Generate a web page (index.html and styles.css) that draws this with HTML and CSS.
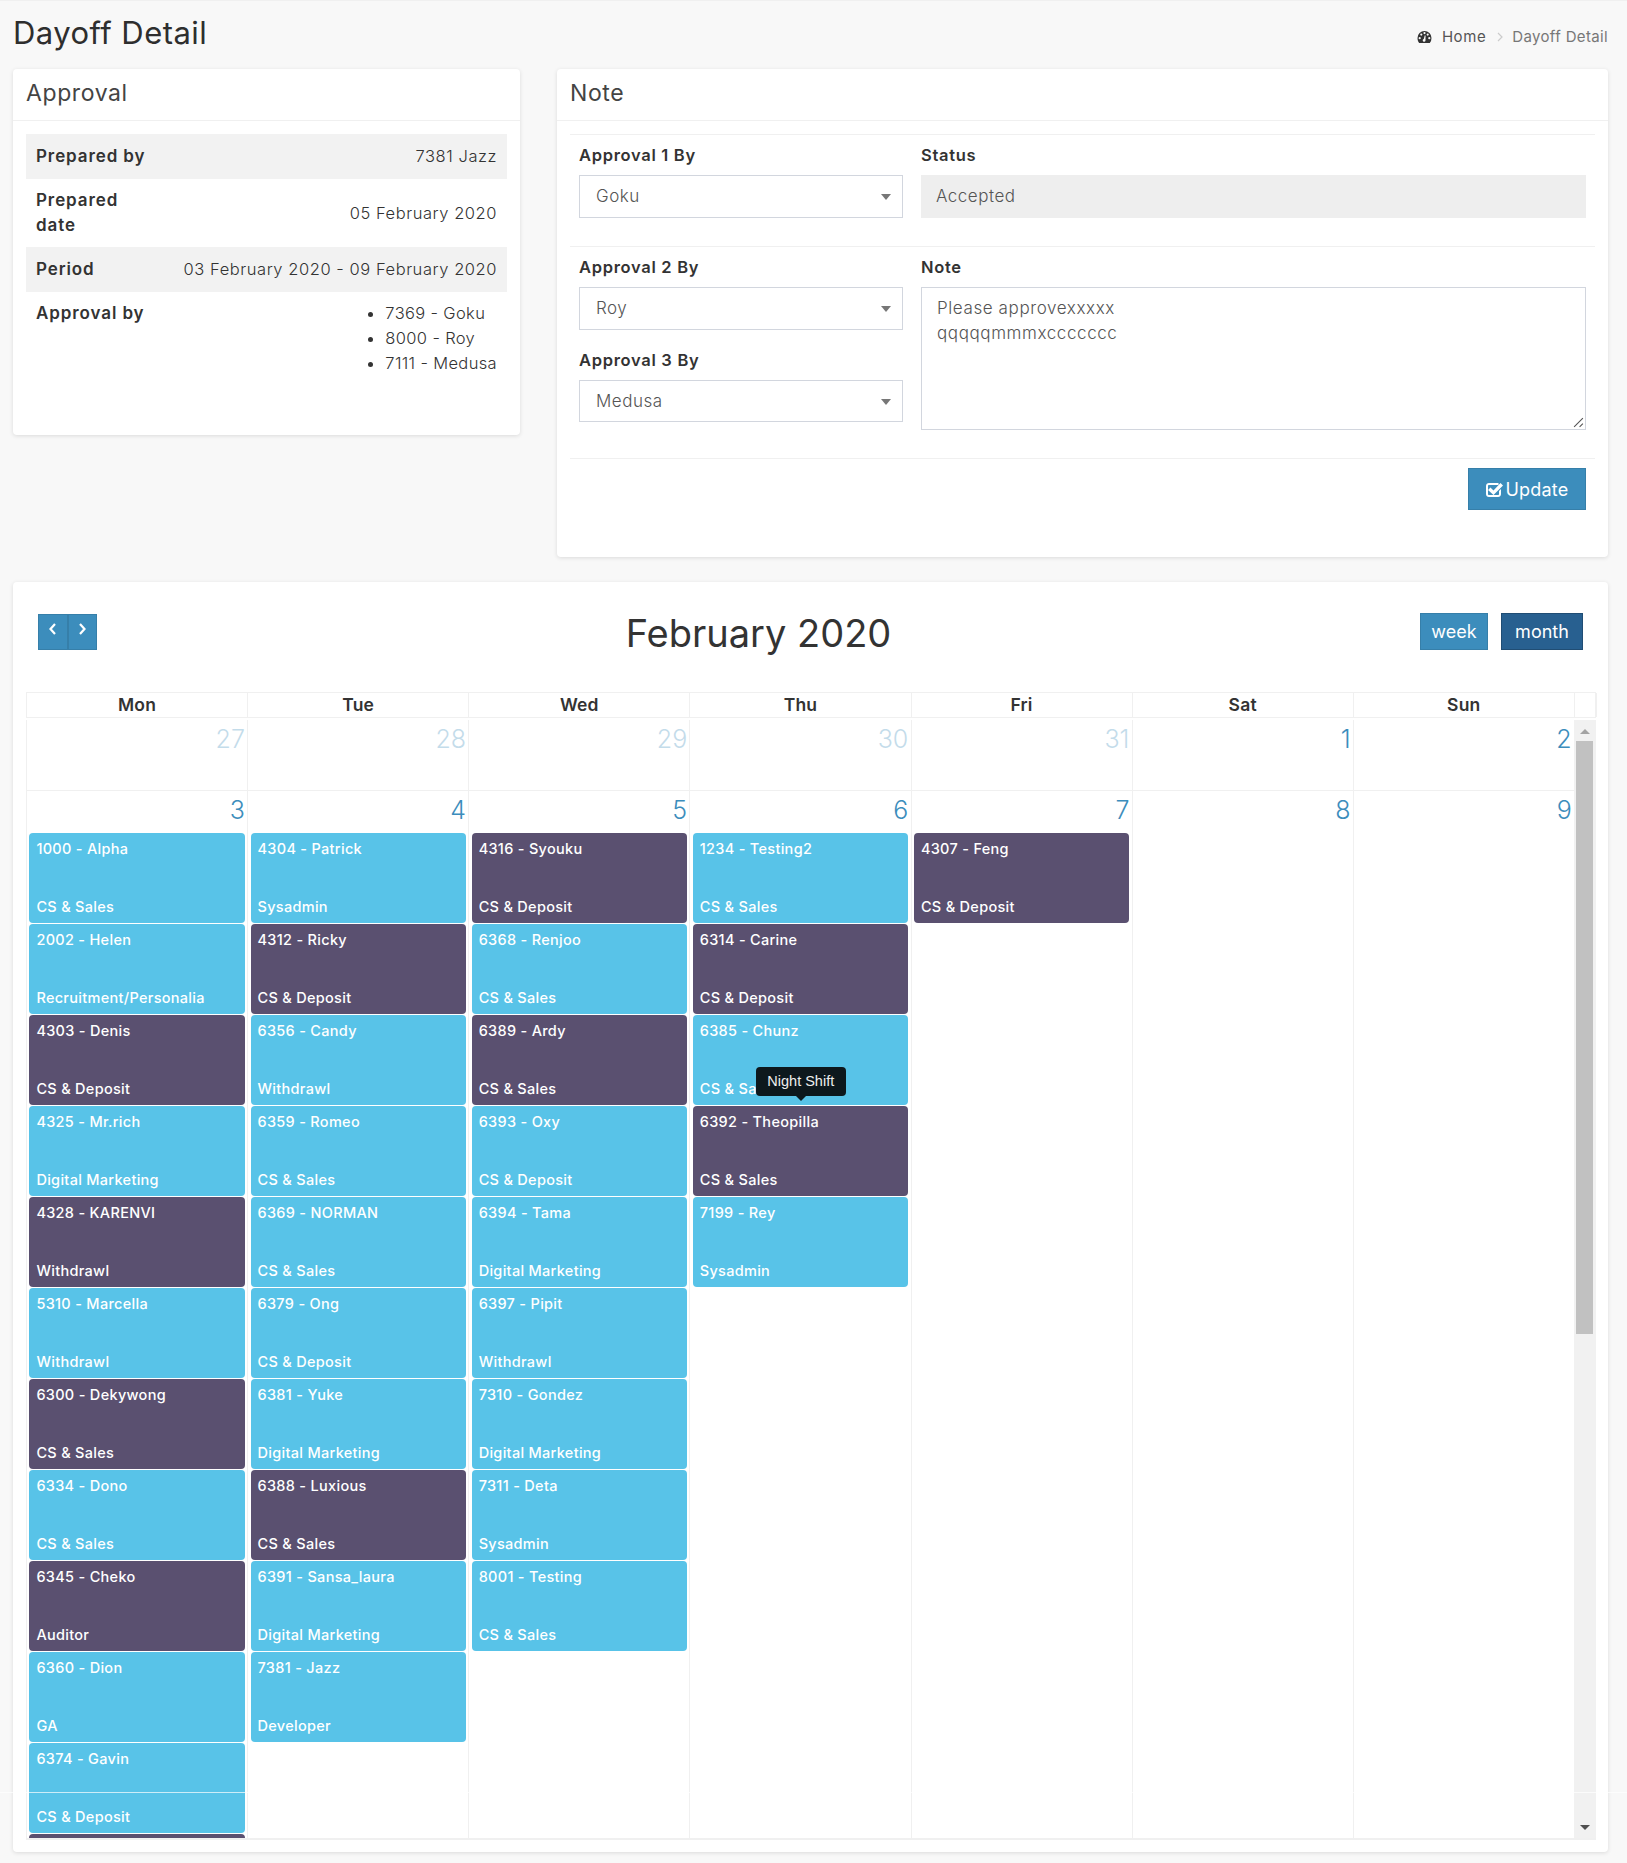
FILE: index.html
```html
<!DOCTYPE html>
<html lang="en">
<head>
    <meta charset="UTF-8">
    <meta name="viewport" content="width=device-width, initial-scale=1.0">
    <title>Dayoff Detail</title>
    <link rel="stylesheet" href="styles.css">
</head>
<body>

    <div class="page-head">
        <h1>Dayoff Detail</h1>
        <div class="crumbs">
            <svg class="crumb-icon" viewBox="0 0 14 12"><path d="M7 0a7 7 0 0 0-7 7c0 1.9.6 3.6 1.700 5h10.600A7.900 7.900 0 0 0 14 7a7 7 0 0 0-7-7zM2.200 8.300a1.100 1.100 0 1 1 0-2.200 1.100 1.100 0 0 1 0 2.200zm1.600-3.600a1.100 1.100 0 1 1 0-2.200 1.100 1.100 0 0 1 0 2.200zM7 3.200a1.100 1.100 0 1 1 0-2.200 1.100 1.100 0 0 1 0 2.200zm1 6.200a1.400 1.400 0 1 1-1.700-1.500l.9-3.300h.9l-.1 3.400c0 .1 0 .2 0 .4zm2.200-4.700a1.100 1.100 0 1 1 0-2.200 1.100 1.100 0 0 1 0 2.200zm1.600 3.600a1.100 1.100 0 1 1 0-2.200 1.100 1.100 0 0 1 0 2.200z"/></svg>
            <span class="crumb-home">Home</span>
            <svg class="crumb-sep" viewBox="0 0 6 10"><path d="m1 1 4 4-4 4" fill="none" stroke="#ccc" stroke-width="1.200"/></svg>
            <span class="crumb-current">Dayoff Detail</span>
        </div>
    </div>

    <div class="top-row">
        <!-- Approval -->
        <section class="card approval-card">
            <h2 class="card-title">Approval</h2>
            <div class="approval-body">
                <table class="info-table">
                    <tr class="stripe">
                        <th>Prepared by</th>
                        <td>7381 Jazz</td>
                    </tr>
                    <tr>
                        <th>Prepared<br>date</th>
                        <td>05 February 2020</td>
                    </tr>
                    <tr class="stripe">
                        <th>Period</th>
                        <td>03 February 2020 - 09 February 2020</td>
                    </tr>
                    <tr>
                        <th>Approval by</th>
                        <td>
                            <ul class="approver-list">
                                <li>7369 - Goku</li>
                                <li>8000 - Roy</li>
                                <li>7111 - Medusa</li>
                            </ul>
                        </td>
                    </tr>
                </table>
            </div>
        </section>

        <!-- Note -->
        <section class="card note-card">
            <h2 class="card-title">Note</h2>
            <div class="note-body">
                <div class="form-row first">
                    <div class="field">
                        <label>Approval 1 By</label>
                        <div class="select-box">Goku<span class="caret"></span></div>
                    </div>
                    <div class="field wide">
                        <label>Status</label>
                        <div class="readonly-box">Accepted</div>
                    </div>
                </div>
                <div class="form-row second">
                    <div class="field">
                        <label>Approval 2 By</label>
                        <div class="select-box">Roy<span class="caret"></span></div>
                        <label class="next-label">Approval 3 By</label>
                        <div class="select-box short">Medusa<span class="caret"></span></div>
                    </div>
                    <div class="field wide">
                        <label>Note</label>
                        <div class="note-box">Please approvexxxxx<br>qqqqqmmmxccccccc
                            <svg class="resize-grip" viewBox="0 0 10 10"><path d="M1 9 9 1M6 9 9 6" fill="none" stroke="#555" stroke-width="1"/></svg>
                        </div>
                    </div>
                </div>
                <div class="form-actions">
                    <button class="btn update-btn">
                        <svg class="check-icon" viewBox="0 0 17 15"><path d="M3 1h9.500v2H3c-.6 0-1 .4-1 1v8c0 .6.4 1 1 1h9c.6 0 1-.4 1-1V9l2-2v5c0 1.700-1.300 3-3 3H3c-1.700 0-3-1.300-3-3V4c0-1.700 1.300-3 3-3z"/><path d="m4.500 5.500 3 3L14.500 1 17 3.400 7.500 13 2 7.900z"/></svg>
                        Update
                    </button>
                </div>
            </div>
        </section>
    </div>

    <!-- Calendar -->
    <section class="card calendar-card">
        <div class="cal-toolbar">
            <div class="nav-group">
                <button class="nav-btn"><svg viewBox="0 0 10 14"><path d="M7 2 2.500 7 7 12" fill="none" stroke="#fff" stroke-width="2.200"/></svg></button>
                <button class="nav-btn"><svg viewBox="0 0 10 14"><path d="M3 2l4.500 5L3 12" fill="none" stroke="#fff" stroke-width="2.200"/></svg></button>
            </div>
            <h2 class="cal-title">February 2020</h2>
            <div class="view-group">
                <button class="btn view-btn">week</button>
                <button class="btn view-btn active">month</button>
            </div>
        </div>

        <div class="cal-head">
            <div>Mon</div><div>Tue</div><div>Wed</div><div>Thu</div><div>Fri</div><div>Sat</div><div>Sun</div>
            <div class="gutter"></div>
        </div>

        <div class="cal-scroll">
            <div class="cal-weeks">
                <div class="week first-week">
                    <div class="day faded"><span class="num">27</span></div>
                    <div class="day faded"><span class="num">28</span></div>
                    <div class="day faded"><span class="num">29</span></div>
                    <div class="day faded"><span class="num">30</span></div>
                    <div class="day faded"><span class="num">31</span></div>
                    <div class="day"><span class="num">1</span></div>
                    <div class="day"><span class="num">2</span></div>
                </div>
                <div class="week">
                    <div class="day">
                        <span class="num">3</span>
                        <div class="event"><span>1000 - Alpha</span><span>CS &amp; Sales</span></div>
                        <div class="event"><span>2002 - Helen</span><span>Recruitment/Personalia</span></div>
                        <div class="event night"><span>4303 - Denis</span><span>CS &amp; Deposit</span></div>
                        <div class="event"><span>4325 - Mr.rich</span><span>Digital Marketing</span></div>
                        <div class="event night"><span>4328 - KARENVI</span><span>Withdrawl</span></div>
                        <div class="event"><span>5310 - Marcella</span><span>Withdrawl</span></div>
                        <div class="event night"><span>6300 - Dekywong</span><span>CS &amp; Sales</span></div>
                        <div class="event"><span>6334 - Dono</span><span>CS &amp; Sales</span></div>
                        <div class="event night"><span>6345 - Cheko</span><span>Auditor</span></div>
                        <div class="event"><span>6360 - Dion</span><span>GA</span></div>
                        <div class="event"><span>6374 - Gavin</span><span>CS &amp; Deposit</span></div>
                        <div class="event night"></div>
                    </div>
                    <div class="day">
                        <span class="num">4</span>
                        <div class="event"><span>4304 - Patrick</span><span>Sysadmin</span></div>
                        <div class="event night"><span>4312 - Ricky</span><span>CS &amp; Deposit</span></div>
                        <div class="event"><span>6356 - Candy</span><span>Withdrawl</span></div>
                        <div class="event"><span>6359 - Romeo</span><span>CS &amp; Sales</span></div>
                        <div class="event"><span>6369 - NORMAN</span><span>CS &amp; Sales</span></div>
                        <div class="event"><span>6379 - Ong</span><span>CS &amp; Deposit</span></div>
                        <div class="event"><span>6381 - Yuke</span><span>Digital Marketing</span></div>
                        <div class="event night"><span>6388 - Luxious</span><span>CS &amp; Sales</span></div>
                        <div class="event"><span>6391 - Sansa_laura</span><span>Digital Marketing</span></div>
                        <div class="event"><span>7381 - Jazz</span><span>Developer</span></div>
                    </div>
                    <div class="day">
                        <span class="num">5</span>
                        <div class="event night"><span>4316 - Syouku</span><span>CS &amp; Deposit</span></div>
                        <div class="event"><span>6368 - Renjoo</span><span>CS &amp; Sales</span></div>
                        <div class="event night"><span>6389 - Ardy</span><span>CS &amp; Sales</span></div>
                        <div class="event"><span>6393 - Oxy</span><span>CS &amp; Deposit</span></div>
                        <div class="event"><span>6394 - Tama</span><span>Digital Marketing</span></div>
                        <div class="event"><span>6397 - Pipit</span><span>Withdrawl</span></div>
                        <div class="event"><span>7310 - Gondez</span><span>Digital Marketing</span></div>
                        <div class="event"><span>7311 - Deta</span><span>Sysadmin</span></div>
                        <div class="event"><span>8001 - Testing</span><span>CS &amp; Sales</span></div>
                    </div>
                    <div class="day">
                        <span class="num">6</span>
                        <div class="event"><span>1234 - Testing2</span><span>CS &amp; Sales</span></div>
                        <div class="event night"><span>6314 - Carine</span><span>CS &amp; Deposit</span></div>
                        <div class="event has-tip"><span>6385 - Chunz</span><span>CS &amp; Sales</span><div class="tooltip">Night Shift</div></div>
                        <div class="event night"><span>6392 - Theopilla</span><span>CS &amp; Sales</span></div>
                        <div class="event"><span>7199 - Rey</span><span>Sysadmin</span></div>
                    </div>
                    <div class="day">
                        <span class="num">7</span>
                        <div class="event night"><span>4307 - Feng</span><span>CS &amp; Deposit</span></div>
                    </div>
                    <div class="day"><span class="num">8</span></div>
                    <div class="day"><span class="num">9</span></div>
                </div>
            </div>
            <div class="scrollbar">
                <span class="arrow-up"></span>
                <div class="thumb"></div>
                <span class="arrow-down"></span>
            </div>
        </div>
    </section>

    <div class="seam"></div>

</body>
</html>
```

FILE: styles.css
```css
* {
    box-sizing: border-box;
}
body {
    margin: 0;
    height: 1863px;
    overflow: hidden;
    position: relative;
    font-family: Inter, "Open Sans", sans-serif;
    font-size: 15px;
    color: #333;
    background-color: #f8f8f8;
    border-top: 1px solid #f0f0f0;
}
h1, h2 {
    margin: 0;
    font-weight: 400;
}

/* page head */
.page-head {
    display: flex;
    justify-content: space-between;
    align-items: center;
    height: 68px;
    padding: 0 19px 0 13px;
}
h1 {
    font-size: 31px;
    letter-spacing: 0.45px;
    color: #2e2e2e;
    margin-top: -5px;
}
.crumbs {
    display: flex;
    align-items: center;
    font-size: 15px;
    margin-top: 3px;
}
.crumb-icon {
    width: 15px;
    height: 12px;
    fill: #333;
    margin-right: 10px;
}
.crumb-home {
    color: #555;
    letter-spacing: 0.6px;
}
.crumb-sep {
    width: 6px;
    height: 10px;
    margin: 0 9px 0 11px;
}
.crumb-current {
    color: #777;
    letter-spacing: 0.35px;
}

/* cards */
.card {
    background: white;
    border-radius: 4px;
    box-shadow: 0 1px 4px rgba(0, 0, 0, 0.12);
}
.card-title {
    height: 52px;
    line-height: 48px;
    padding-left: 13px;
    font-size: 23px;
    letter-spacing: 0.6px;
    color: #444;
    border-bottom: 1px solid #f0f0f0;
}
.top-row {
    display: flex;
    align-items: flex-start;
    gap: 37px;
    padding: 0 19px 0 13px;
}
.approval-card {
    width: 507px;
    height: 366px;
}
.note-card {
    flex: 1;
    height: 488px;
}

/* approval table */
.approval-body {
    padding: 13px 13px;
}
.info-table {
    width: 100%;
    border-collapse: collapse;
}
.info-table tr {
    height: 45px;
}
.info-table th,
.info-table td {
    padding: 9px 10px;
    line-height: 25px;
    vertical-align: middle;
    font-size: 16.5px;
}
.info-table th {
    width: 130px;
    text-align: left;
    font-size: 17px;
    font-weight: 600;
    letter-spacing: 0.9px;
    white-space: nowrap;
}
.info-table td {
    text-align: right;
    font-weight: 300;
    letter-spacing: 0.55px;
    white-space: nowrap;
}
.info-table tr:last-child th {
    vertical-align: top;
}
.stripe {
    background: #f2f2f2;
}
.approver-list {
    display: inline-block;
    margin: 0;
    padding-left: 20px;
    text-align: left;
    letter-spacing: 0.35px;
}

/* note form */
.note-body {
    padding: 13px 13px 0;
}
.form-row {
    display: flex;
    gap: 18px;
    padding: 12px 9px 0 9px;
    border-top: 1px solid #f0f0f0;
}
.first {
    height: 112px;
}
.second {
    height: 212px;
}
.field {
    width: 324px;
}
.wide {
    flex: 1;
}
label {
    display: block;
    height: 30px;
    margin-top: -2px;
    font-weight: 600;
    font-size: 16.5px;
    letter-spacing: 0.7px;
}
.next-label {
    margin-top: 20px;
}
.select-box,
.readonly-box {
    position: relative;
    height: 43px;
    line-height: 41px;
    padding-left: 16px;
    font-size: 17px;
    letter-spacing: 0.5px;
    font-weight: 300;
    color: #555;
    border: 1px solid #d2d6de;
}
.short {
    height: 42px;
    line-height: 40px;
}
.readonly-box {
    padding-left: 14px;
    background: #eee;
    border-color: #eee;
}
.caret {
    position: absolute;
    right: 11px;
    top: 18px;
    border-left: 5px solid transparent;
    border-right: 5px solid transparent;
    border-top: 6px solid #777;
}
.note-box {
    position: relative;
    height: 143px;
    padding: 8px 15px;
    line-height: 25px;
    font-size: 17px;
    letter-spacing: 0.6px;
    font-weight: 300;
    color: #555;
    border: 1px solid #d2d6de;
}
.resize-grip {
    position: absolute;
    right: 1px;
    bottom: 1px;
    width: 11px;
    height: 11px;
}
.form-actions {
    display: flex;
    justify-content: flex-end;
    padding: 9px 9px 0;
    border-top: 1px solid #f0f0f0;
}

/* buttons */
.btn {
    font-family: inherit;
    color: white;
    background: #3c8dbc;
    border: 1px solid #367fa9;
    cursor: pointer;
}
.update-btn {
    display: flex;
    align-items: center;
    justify-content: center;
    gap: 3px;
    width: 118px;
    height: 42px;
    font-size: 18px;
    letter-spacing: 0.2px;
}
.check-icon {
    width: 17px;
    height: 15px;
    fill: white;
}

/* calendar */
.calendar-card {
    margin: 25px 19px 0 13px;
    height: 1270px;
    padding: 0 12px 0 13px;
}
.cal-toolbar {
    display: flex;
    justify-content: space-between;
    height: 110px;
    padding: 32px 13px 0 12px;
    position: relative;
}
.nav-group {
    display: flex;
    height: 36px;
}
.nav-btn {
    width: 29.5px;
    padding: 0 0 4px;
    background: #3c8dbc;
    border: 1px solid #367fa9;
}
.nav-btn svg {
    width: 10px;
    height: 14px;
}
.cal-title {
    font-size: 38px;
    line-height: 54px;
    margin-top: -8px;
    color: #333;
}
.view-group {
    display: flex;
    gap: 13px;
    height: 37px;
    margin-top: -1px;
}
.view-btn {
    width: 68px;
    font-size: 18px;
}
.view-btn.active {
    width: 82px;
    background: #286090;
    border-color: #204d74;
}
.cal-head {
    display: grid;
    grid-template-columns: repeat(7, 221.14px) 22px;
    height: 26px;
    font-weight: 600;
    font-size: 17.5px;
    letter-spacing: 0.2px;
    line-height: 24px;
    text-align: center;
    border: 1px solid #f0f0f0;
}
.cal-head div {
    border-right: 1px solid #f0f0f0;
}
.cal-scroll {
    display: flex;
    height: 1120px;
    margin-top: 2px;
    overflow: hidden;
    border-bottom: 2px solid #f0f0f0;
}
.cal-weeks {
    width: 1548px;
    overflow: hidden;
}
.week {
    display: grid;
    grid-template-columns: repeat(7, 221.14px);
    border-top: 1px solid #f0f0f0;
}
.first-week {
    height: 70px;
    border-top: none;
}
.day {
    display: flex;
    flex-direction: column;
    gap: 1px;
    min-height: 1050px;
    padding: 0 2.2px 0 2.4px;
    border-left: 1px solid #f0f0f0;
}
.first-week .day {
    min-height: 0;
}
.num {
    height: 41px;
    line-height: 39px;
    text-align: right;
    font-size: 25px;
    font-weight: 300;
    color: #3c8dbc;
}
.faded .num {
    opacity: 0.3;
}
.event {
    flex: none;
    position: relative;
    display: flex;
    flex-direction: column;
    justify-content: space-between;
    height: 90px;
    padding: 4px 7px;
    font-size: 14.5px;
    letter-spacing: 0.3px;
    font-weight: 500;
    line-height: 24px;
    color: white;
    background: #58c3e8;
    border-radius: 4px;
}
.night {
    background: #5a5070;
}
.tooltip {
    position: absolute;
    left: 63px;
    top: 52px;
    width: 90px;
    height: 29px;
    line-height: 29px;
    text-align: center;
    font-family: "Liberation Sans", Arial, sans-serif;
    font-size: 14.5px;
    letter-spacing: 0;
    font-weight: 400;
    color: #eee;
    background: #0d181d;
    border-radius: 4px;
}
.tooltip::after {
    content: "";
    position: absolute;
    left: 40px;
    bottom: -5px;
    border-left: 5px solid transparent;
    border-right: 5px solid transparent;
    border-top: 5px solid #0d181d;
}
.scrollbar {
    position: relative;
    flex: none;
    width: 22px;
    background: #f1f1f1;
}
.thumb {
    position: absolute;
    left: 2px;
    right: 3px;
    top: 21px;
    height: 593px;
    background: #c1c1c1;
}
.arrow-up,
.arrow-down {
    position: absolute;
    left: 6px;
    border-left: 5px solid transparent;
    border-right: 5px solid transparent;
}
.arrow-up {
    top: 9px;
    border-bottom: 5px solid #a3a3a3;
}
.arrow-down {
    bottom: 8px;
    border-top: 5px solid #505050;
}

/* stitch line that runs across the whole screenshot */
.seam {
    position: absolute;
    left: 0;
    right: 0;
    top: 1791px;
    height: 1px;
    background: rgba(255, 255, 255, 0.7);
}
```
